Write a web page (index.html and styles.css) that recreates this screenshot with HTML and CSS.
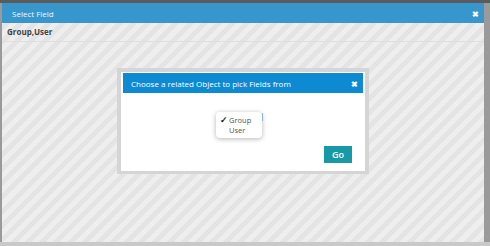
FILE: index.html
```html
<!DOCTYPE html>
<html lang="en">
<head>
    <meta charset="UTF-8">
    <title>Select Field</title>
    <link rel="stylesheet" href="styles.css">
</head>
<body>

    <!-- Outer dialog -->
    <div class="dialog">
        <div class="dialog-head">
            <span>Select Field</span>
            <span class="close">&#10006;</span>
        </div>
        <div class="dialog-path">Group,User</div>

        <div class="dialog-body">
            <!-- Inner modal -->
            <div class="modal">
                <div class="modal-head">
                    <span>Choose a related Object to pick Fields from</span>
                    <span class="close">&#10006;</span>
                </div>
                <div class="modal-body">
                    <div class="picker">
                        <div class="options">
                            <div class="option"><span class="tick">&#10003;</span>Group</div>
                            <div class="option">User</div>
                        </div>
                        <span class="focus"></span>
                    </div>
                    <div class="actions">
                        <button class="go">Go</button>
                    </div>
                </div>
            </div>
        </div>
    </div>

</body>
</html>
```

FILE: styles.css
```css
body {
    margin: 0;
    height: 246px;
    background: linear-gradient(to bottom, #5b5b5b 0, #5b5b5b 3px, #9a9a9a 3px, #9a9a9a 242px, #c9c9c9 242px);
    font-family: 'Open Sans', 'Noto Sans', sans-serif;
    overflow: hidden;
}
.dialog {
    margin: 3px 6px 0 2px;
    height: 239px;
    display: flex;
    flex-direction: column;
    background: repeating-linear-gradient(135deg, #eeeeee 0, #eeeeee 5px, #e4e4e4 5px, #e4e4e4 10px);
}
.dialog-head {
    height: 20px;
    background-color: #3797cd;
    color: #eef6fb;
    font-size: 8px;
    padding: 0 5px 0 10px;
    display: flex;
    justify-content: space-between;
    align-items: center;
}
.close {
    font-size: 8px;
    font-weight: bold;
    color: #fff;
}
.dialog-path {
    height: 18px;
    line-height: 18px;
    padding: 0 5px;
    font-size: 8px;
    font-weight: bold;
    color: #444;
    border-bottom: 1px solid #dedede;
}
.dialog-body {
    flex: 1;
    display: flex;
    justify-content: center;
    align-items: flex-start;
    padding-top: 26px;
}
.modal {
    width: 240px;
    height: 98px;
    border: 4px solid #d5d5d5;
    border-bottom-width: 3px;
    background: #fff;
    padding: 1px 2px 0;
    display: flex;
    flex-direction: column;
}
.modal-head {
    height: 20px;
    background-color: #0e8ad2;
    color: #fff;
    font-size: 8px;
    padding: 0 5px 0 8px;
    display: flex;
    justify-content: space-between;
    align-items: center;
}
.modal-body {
    flex: 1;
    display: flex;
    flex-direction: column;
    padding-top: 19px;
}
.picker {
    align-self: center;
    display: flex;
    align-items: flex-start;
    margin-left: -7px;
}
.options {
    width: 42px;
    padding: 3px 2px;
    background: #fff;
    border-radius: 4px;
    box-shadow: 0 1px 5px rgba(0, 0, 0, 0.3);
    font-size: 7.5px;
    color: #555;
}
.option {
    height: 10px;
    line-height: 10px;
    padding-left: 11px;
    position: relative;
}
.tick {
    position: absolute;
    left: 2px;
    top: 0;
    font-size: 9px;
    font-weight: bold;
    color: #222;
}
.focus {
    width: 1px;
    height: 8px;
    margin-top: 1px;
    background: #8ab6e8;
}
.actions {
    display: flex;
    justify-content: flex-end;
    margin-top: 8px;
    padding-right: 11px;
}
.go {
    width: 28px;
    height: 17px;
    padding: 0;
    border: none;
    background-color: #1899a6;
    color: #fff;
    font-family: inherit;
    font-size: 9px;
    font-weight: 600;
}
```
